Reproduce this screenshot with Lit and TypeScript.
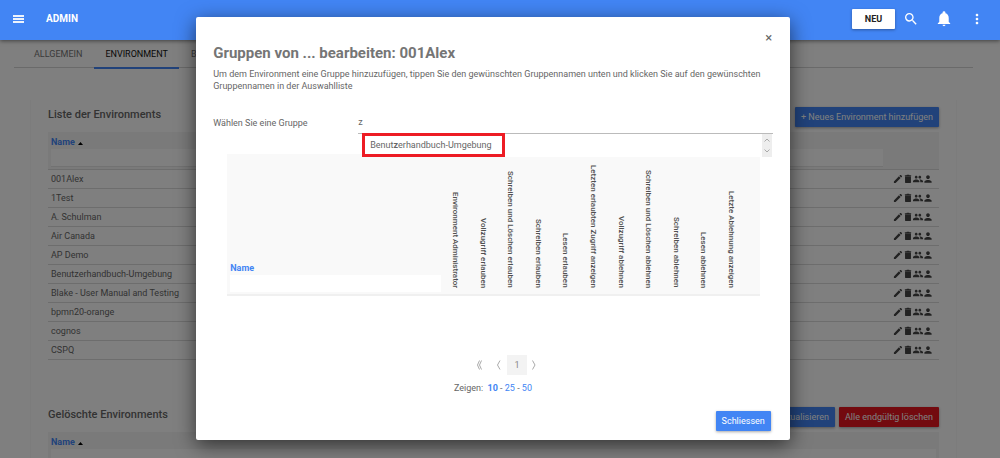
import { LitElement, html, css, svg } from "lit";
import { customElement, property, state } from "lit/decorators.js";

const ICONS: Record<string, string> = {
  search: "M15.5 14h-.79l-.28-.27A6.47 6.47 0 0 0 16 9.5 6.5 6.5 0 1 0 9.5 16c1.61 0 3.09-.59 4.23-1.57l.27.28v.79l5 4.99L20.49 19l-4.99-5zm-6 0C7.01 14 5 11.99 5 9.5S7.01 5 9.5 5 14 7.01 14 9.5 11.99 14 9.5 14z",
  bell: "M12 22c1.1 0 2-.9 2-2h-4c0 1.1.9 2 2 2zm6.5-6v-5.500c0-3.070-1.630-5.640-4.500-6.320V3.500a2 2 0 0 0-4 0v.680C7.130 4.860 5.500 7.420 5.500 10.500V16l-2 2v1h17v-1l-2-2z",
  more: "M12 8c1.1 0 2-.9 2-2s-.9-2-2-2-2 .9-2 2 .9 2 2 2zm0 2c-1.1 0-2 .9-2 2s.9 2 2 2 2-.9 2-2-.9-2-2-2zm0 6c-1.1 0-2 .9-2 2s.9 2 2 2 2-.9 2-2-.9-2-2-2z",
  edit: "M3 17.250V21h3.750L17.810 9.940l-3.750-3.750L3 17.250zM20.710 7.040a1 1 0 0 0 0-1.410l-2.340-2.340a1 1 0 0 0-1.410 0l-1.830 1.830 3.750 3.750 1.830-1.830z",
  trash: "M5.500 6.500V19c0 1.100.9 2 2 2h9c1.100 0 2-.9 2-2V6.500h-13zM19 3.500h-3.500l-1-1h-5l-1 1H5V6h14V3.500z",
  group: "M16 11c1.660 0 2.990-1.340 2.990-3S17.660 5 16 5s-3 1.340-3 3 1.340 3 3 3zm-8 0c1.660 0 2.990-1.340 2.990-3S9.660 5 8 5 5 6.340 5 8s1.340 3 3 3zm0 2c-2.330 0-7 1.170-7 3.500V19h14v-2.500c0-2.330-4.670-3.500-7-3.500zm8 0c-.29 0-.62.020-.97.050 1.160.840 1.970 1.970 1.970 3.450V19h6v-2.500c0-2.330-4.670-3.500-7-3.500z",
  person: "M12 12c2.210 0 4-1.790 4-4s-1.790-4-4-4-4 1.790-4 4 1.790 4 4 4zm0 2c-2.670 0-8 1.340-8 4v2h16v-2c0-2.660-5.330-4-8-4z",
};

const icon = (name: string, box = "0 0 24 24") =>
  html`<svg class="icon" viewBox=${box} aria-hidden="true">${svg`<path d=${ICONS[name]}></path>`}</svg>`;

const base = css`
  * { box-sizing: border-box; }
  button { font: inherit; border: 0; margin: 0; padding: 0; background: none; color: inherit; cursor: pointer; }
  input { font: inherit; color: inherit; border: 0; margin: 0; border-radius: 0; outline: 0; }
  a { color: inherit; text-decoration: none; }
  .icon { display: block; fill: currentColor; }
  .btn {
    height: 20px; padding: 0 6px; border-radius: 1px; background: #4285f4; color: #fff;
    box-shadow: 0 1px 3px rgba(0, 0, 0, .35); white-space: nowrap;
  }
  .btn.danger { background: #e6141e; }
`;

@customElement("app-header")
class AppHeader extends LitElement {
  static styles = [base, css`
    :host {
      display: flex; align-items: center; height: 40px; padding: 0 15px 2px 13px; background: #4285f4;
      color: #fff; box-shadow: 0 1px 4px rgba(0, 0, 0, .5);
    }
    .menu .icon { width: 11px; height: 8px; opacity: .9; }
    .title { margin: 0 auto 0 22px; font-size: 10px; font-weight: 700; }
    .new {
      width: 43px; height: 20px; background: #fff; color: #222; font-size: 9px; font-weight: 700;
      border-radius: 1px; box-shadow: 0 1px 3px rgba(0, 0, 0, .35);
    }
    .tools { display: flex; align-items: center; gap: 17px; margin-left: 8px; }
    .tools .icon { width: 16px; height: 16px; }
  `];

  render() {
    return html`
      <button class="menu" aria-label="Menü">
        <svg class="icon" viewBox="0 0 11 8"><path d="M0 0h11v2H0zM0 3h11v2H0zM0 6h11v2H0z"></path></svg>
      </button>
      <h1 class="title">ADMIN</h1>
      <button class="new">NEU</button>
      <div class="tools">
        <button aria-label="Suchen">${icon("search")}</button>
        <button aria-label="Benachrichtigungen">${icon("bell", "1 1 22 22")}</button>
        <button aria-label="Mehr">${icon("more")}</button>
      </div>`;
  }
}

@customElement("environment-table")
class EnvironmentTable extends LitElement {
  @property({ type: Array }) rows: string[] = [];
  @property({ type: Boolean }) actions = false;

  static styles = [base, css`
    :host { display: block; }
    table { width: 100%; border-collapse: collapse; }
    th { background: #f5f5f5; padding: 0 3px; text-align: left; vertical-align: top; height: 37px; }
    .sort { display: flex; align-items: center; gap: 3px; height: 17px; padding-top: 3px; color: #4285f4; font-weight: 700; }
    .arrow { width: 5px; height: 3px; fill: #000; margin-top: 3px; }
    .filter { display: block; width: 100%; height: 18px; background: #fff; border-bottom: 1px solid #e4e4e4; }
    .tools { width: 53px; }
    td { height: 19px; padding: 0 3px; border-top: 1px solid #dadada; }
    tbody tr:last-child td { border-bottom: 1px solid #dadada; }
    .actions { display: flex; justify-content: flex-end; padding-right: 3px; color: #444; }
    .actions .icon { width: 10px; height: 10px; }
  `];

  private action(name: string, label: string) {
    return html`<button aria-label=${label}>${icon(name, "1 1 22 22")}</button>`;
  }

  render() {
    return html`
      <table>
        <thead>
          <tr>
            <th>
              <button class="sort">Name <svg class="arrow" viewBox="0 0 5 3"><path d="M0 3L2.500 0L5 3z"></path></svg></button>
              <input class="filter" aria-label="Name filtern">
            </th>
            ${this.actions ? html`<th class="tools"></th>` : ""}
          </tr>
        </thead>
        <tbody>
          ${this.rows.map((name) => html`
            <tr>
              <td>${name}</td>
              ${this.actions ? html`<td><div class="actions">
                ${this.action("edit", "Bearbeiten")}
                ${this.action("trash", "Löschen")}
                ${this.action("group", "Gruppen")}
                ${this.action("person", "Benutzer")}
              </div></td>` : ""}
            </tr>`)}
        </tbody>
      </table>`;
  }
}

@customElement("group-dialog")
class GroupDialog extends LitElement {
  @state() private rights = [
    "Environment Administrator", "Vollzugriff erlauben", "Schreiben und Löschen erlauben", "Schreiben erlauben",
    "Lesen erlauben", "Letzten erlaubten Zugriff anzeigen", "Vollzugriff ablehnen",
    "Schreiben und Löschen ablehnen", "Schreiben ablehnen", "Lesen ablehnen", "Letzte Ablehnung anzeigen",
  ];

  static styles = [base, css`
    :host {
      display: block; padding: 14px 17px 9px; background: #fff; color: #666; border-radius: 2px;
      box-shadow: 0 5px 20px rgba(0, 0, 0, .6);
    }
    .close { display: block; width: 8px; height: 14px; margin-left: auto; font-size: 13px; line-height: 14px; }
    h2 { margin: 0; font-size: 15px; line-height: 16px; font-weight: 700; color: #757575; }
    .intro { margin: 7px 0 0; line-height: 12px; }
    .field { display: grid; grid-template-columns: 145px 1fr; align-items: center; margin-top: 19px; }
    .combo { position: relative; }
    .query { display: block; width: 100%; height: 23px; padding: 0; background: none; border-bottom: 1px solid #bbb; }
    .list {
      position: absolute; top: 100%; left: 5px; right: 1px; height: 23px; display: flex;
      justify-content: space-between; background: #fff;
    }
    .option { width: 143px; height: 24px; margin: -1px 0 0 -1px; padding-left: 5px; border: 3px solid #ed1c24; text-align: left; }
    .scroll { display: flex; flex-direction: column; justify-content: space-between; align-items: center; width: 10px; padding: 4px 0; background: #eee; }
    .scroll svg { width: 6px; height: 4px; fill: none; stroke: #aaa; }
    .rights { width: calc(100% - 27px); margin: 20px 13px 0 14px; table-layout: fixed; border-collapse: collapse; background: #f9f9f9; border-bottom: 2px solid #f0f0f0; }
    th { height: 141px; padding: 0; vertical-align: bottom; font-weight: 400; }
    .name { width: 214px; padding: 0 0 2px 3px; text-align: left; color: #4285f4; font-weight: 700; }
    .name input { display: block; width: 100%; height: 17px; margin-top: 1px; background: #fff; }
    .end { width: 15px; }
    .vertical { writing-mode: vertical-rl; white-space: nowrap; padding-bottom: 6px; font-size: 8px; font-weight: 500; line-height: 10px; color: #505050; display: inline-block; vertical-align: bottom; }
    .pager { display: flex; justify-content: center; align-items: center; margin-top: 59px; padding-left: 30px; color: #888; }
    .pager svg { display: block; width: 18px; height: 10px; fill: none; stroke: #aaa; }
    .pager .current { width: 20px; height: 20px; background: #f3f3f3; }
    .sizes { margin: 7px 0 0; line-height: 12px; text-align: center; }
    .sizes a { color: #4285f4; }
    .sizes .lead { margin-right: 2px; }
    .footer { display: flex; justify-content: flex-end; margin-top: 17px; padding-right: 2px; }
  `];

  render() {
    return html`
      <button class="close" aria-label="Schliessen">×</button>
      <h2>Gruppen von ... bearbeiten: 001Alex</h2>
      <p class="intro">Um dem Environment eine Gruppe hinzuzufügen, tippen Sie den gewünschten Gruppennamen unten und klicken Sie auf den gewünschten Gruppennamen in der Auswahlliste</p>
      <div class="field">
        <label for="group">Wählen Sie eine Gruppe</label>
        <div class="combo">
          <input class="query" id="group" value="z" autocomplete="off">
          <div class="list">
            <button class="option">Benut<b>z</b>erhandbuch-Umgebung</button>
            <div class="scroll">
              <svg viewBox="0 0 6 4"><path d="M.5 3.500L3 1L5.500 3.500"></path></svg>
              <svg viewBox="0 0 6 4"><path d="M.5 .5L3 3L5.500 .5"></path></svg>
            </div>
          </div>
        </div>
      </div>
      <table class="rights">
        <thead>
          <tr>
            <th class="name"><label for="filter">Name</label><input id="filter"></th>
            ${this.rights.map((r) => html`<th><span class="vertical">${r}</span></th>`)}
            <th class="end"></th>
          </tr>
        </thead>
      </table>
      <nav class="pager">
        <button aria-label="Erste Seite"><svg viewBox="0 0 18 10"><path d="M8.500 .5L6.500 5L8.500 9.500M10.500 .5L8.500 5L10.500 9.500"></path></svg></button>
        <button aria-label="Vorherige Seite"><svg viewBox="0 0 18 10"><path d="M11 .5L8.500 5L11 9.500"></path></svg></button>
        <button class="current">1</button>
        <button aria-label="Nächste Seite"><svg viewBox="0 0 18 10"><path d="M5.500 .5L8 5L5.500 9.500"></path></svg></button>
      </nav>
      <p class="sizes"><span class="lead">Zeigen:</span> <a href="#10"><b>10</b></a> - <a href="#25">25</a> - <a href="#50">50</a></p>
      <div class="footer"><button class="btn">Schliessen</button></div>`;
  }
}

@customElement("app-root")
class AppRoot extends LitElement {
  @state() private environments = [
    "001Alex", "1Test", "A. Schulman", "Air Canada", "AP Demo", "Benutzerhandbuch-Umgebung",
    "Blake - User Manual and Testing", "bpmn20-orange", "cognos", "CSPQ",
  ];

  static styles = [base, css`
    :host {
      display: block; position: relative; height: 100vh; overflow: hidden; background: #fff; color: #666;
      font-family: Roboto, "Liberation Sans", sans-serif; font-size: 9px; line-height: 12px;
    }
    app-header { position: relative; z-index: 2; }
    .page { padding: 0 27px 0 14px; }
    .tabs { display: flex; gap: 1px; height: 28px; padding-left: 9px; border-bottom: 1px solid #d4d4d4; }
    .tab { display: flex; align-items: center; height: 29px; padding: 0 11px; color: #757575; border-bottom: 2px solid transparent; }
    .tab.active { color: #111; border-bottom-color: #4285f4; }
    .card { margin: 32px 16px 0 16px; padding: 7px 17px; border: solid #f9f9f9; border-width: 0 1px; }
    .section { margin-bottom: 47px; }
    .head { display: flex; align-items: flex-start; gap: 4px; margin-bottom: 5px; }
    .head h2 { margin: 0 auto 0 0; font-size: 11px; line-height: 16px; font-weight: 500; }
    .backdrop { position: absolute; inset: 0; z-index: 1; background: rgba(0, 0, 0, .5); }
    .layer { position: absolute; inset: 0 14px 0 0; z-index: 3; display: flex; justify-content: center; align-items: flex-start; padding-top: 17px; }
    group-dialog { width: 60.200%; }
  `];

  render() {
    return html`
      <app-header></app-header>
      <main class="page">
        <nav class="tabs">
          <a class="tab" href="#allgemein">ALLGEMEIN</a>
          <a class="tab active" href="#environment">ENVIRONMENT</a>
          <a class="tab" href="#bpm">BPM</a>
        </nav>
        <div class="card">
          <section class="section">
            <div class="head">
              <h2>Liste der Environments</h2>
              <button class="btn">+ Neues Environment hinzufügen</button>
            </div>
            <environment-table .rows=${this.environments} actions></environment-table>
          </section>
          <section class="section">
            <div class="head">
              <h2>Gelöschte Environments</h2>
              <button class="btn">Aktualisieren</button>
              <button class="btn danger">Alle endgültig löschen</button>
            </div>
            <environment-table></environment-table>
          </section>
        </div>
      </main>
      <div class="backdrop"></div>
      <div class="layer"><group-dialog role="dialog" aria-modal="true"></group-dialog></div>`;
  }
}
